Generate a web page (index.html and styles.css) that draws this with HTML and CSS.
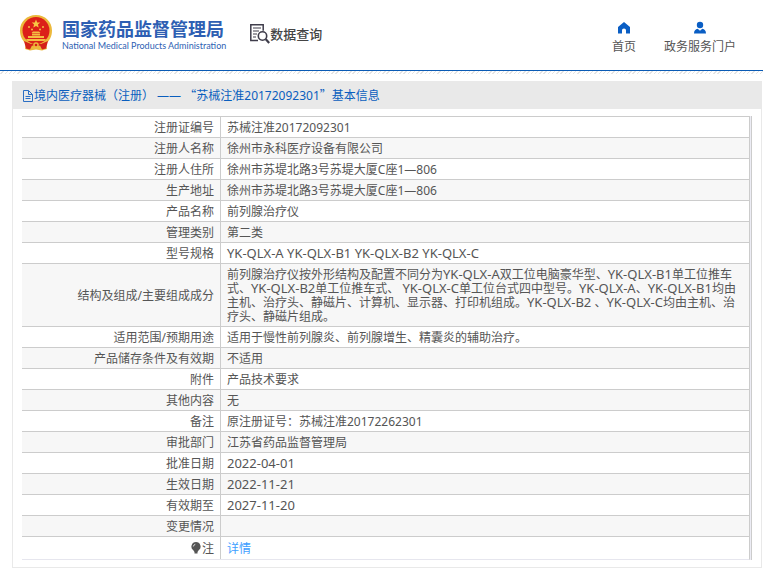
FILE: index.html
```html
<!DOCTYPE html>
<html lang="zh-CN">
<head>
<meta charset="utf-8">
<meta name="viewport" content="width=device-width, initial-scale=1">
<title>数据查询 - 国家药品监督管理局</title>
<link rel="stylesheet" href="styles.css">
</head>
<body>
<header class="header">
  <a class="brand" href="#">
    <svg class="emblem" viewBox="0 0 32 36" aria-hidden="true">
      <path d="M16 0C7 0 0 6.500 0 15.500c0 6 2.500 10.500 6 13L5 34l5 1.500 6-1 6 1 5-1.500-1-5.500c3.500-2.500 6-7 6-13C32 6.500 25 0 16 0z" fill="#ecb93c"/>
      <circle cx="16" cy="15.500" r="13.500" fill="#dc2019"/>
      <path d="M16 4.500l1.200 2.900 3.100.2-2.400 2 .8 3L16 11l-2.700 1.600.8-3-2.400-2 3.100-.2z" fill="#f7c843"/>
      <g fill="#f4bd42"><circle cx="9" cy="12" r="1"/><circle cx="12" cy="14.500" r="1"/><circle cx="20" cy="14.500" r="1"/><circle cx="23" cy="12" r="1"/>
      <path d="M11.500 18l1.500-1.500h6l1.500 1.500zM12 18.500h8v2h-8zM8 21h16v2H8zM6 24h20l-1.500 2h-17z"/></g>
      <path d="M4 26l7 3 5-1.500 5 1.500 7-3-2 7.500-4 1-2-4-4 1.500-4-1.500-2 4-4-1z" fill="#d4211a"/>
      <circle cx="16" cy="30" r="2.800" fill="#f0b93c"/><circle cx="16" cy="30" r="1.300" fill="#d4211a"/>
    </svg>
    <span class="brand-text">
      <span class="brand-cn">国家药品监督管理局</span>
      <span class="brand-en">National Medical Products Administration</span>
    </span>
  </a>
  <a class="search-title" href="#">
    <svg class="search-icon" viewBox="0 0 20 20" fill="none" stroke="#3f3d4b" aria-hidden="true">
      <path d="M8 16.500H.8V.8h12.400v6" stroke-width="1.500"/>
      <path d="M3 4h8M3 7h6M3 10h4M3 13h3" stroke-width="1.200"/>
      <circle cx="12.500" cy="12" r="4.200" stroke-width="1.600"/>
      <path d="M15.800 15.300l3.400 3.700" stroke-width="2.200"/>
    </svg>
    <span>数据查询</span>
  </a>
  <nav class="nav">
    <a href="#"><svg viewBox="0 0 14 14" aria-hidden="true"><path d="M7 1L1 6V12.500h4V9.500c0-1.200.8-2 2-2s2 .8 2 2v3h4V6z" fill="#0a5ec4"/></svg><span>首页</span></a>
    <a href="#"><svg viewBox="0 0 14 14" aria-hidden="true"><circle cx="7" cy="4" r="3.200" fill="#0a5ec4"/><path d="M1 12.500c0-3 1.500-4.300 3.700-4.700L7 9.800l2.300-2c2.200.4 3.700 1.700 3.700 4.700z" fill="#0a5ec4"/></svg><span>政务服务门户</span></a>
  </nav>
</header>
<main class="panel">
  <h1 class="panel-title"><svg class="doc-icon" viewBox="0 0 12 12" fill="none" stroke="#2b6fc4" aria-hidden="true"><path d="M1.500.5h5l4 4v7h-9zM6.500.5v4h4M3.500 6.500h5M3.500 8.500h5"/></svg><span>境内医疗器械（注册） —— <span class="quote">“</span>苏械注准20172092301<span class="quote">”</span>基本信息</span></h1>
  <div class="table-wrap">
    <table class="info">
      <tbody>
        <tr><th scope="row">注册证编号</th><td>苏械注准20172092301</td></tr>
        <tr><th scope="row">注册人名称</th><td>徐州市永科医疗设备有限公司</td></tr>
        <tr><th scope="row">注册人住所</th><td>徐州市苏堤北路3号苏堤大厦C座1—806</td></tr>
        <tr><th scope="row">生产地址</th><td>徐州市苏堤北路3号苏堤大厦C座1—806</td></tr>
        <tr><th scope="row">产品名称</th><td>前列腺治疗仪</td></tr>
        <tr><th scope="row">管理类别</th><td>第二类</td></tr>
        <tr><th scope="row">型号规格</th><td><span class="code">YK-QLX-A YK-QLX-B1 YK-QLX-B2 YK-QLX-C</span></td></tr>
        <tr><th scope="row">结构及组成/主要组成成分</th><td>前列腺治疗仪按外形结构及配置不同分为<span class="code">YK-QLX-A</span>双工位电脑豪华型、<span class="code">YK-QLX-B1</span>单工位推车式、<span class="code">YK-QLX-B2</span>单工位推车式、 <span class="code">YK-QLX-C</span>单工位台式四中型号。<span class="code">YK-QLX-A</span>、<span class="code">YK-QLX-B1</span>均由主机、治疗头、静磁片、计算机、显示器、打印机组成。<span class="code">YK-QLX-B2</span> 、<span class="code">YK-QLX-C</span>均由主机、治疗头、静磁片组成。</td></tr>
        <tr><th scope="row">适用范围/预期用途</th><td>适用于慢性前列腺炎、前列腺增生、精囊炎的辅助治疗。</td></tr>
        <tr><th scope="row">产品储存条件及有效期</th><td>不适用</td></tr>
        <tr><th scope="row">附件</th><td>产品技术要求</td></tr>
        <tr><th scope="row">其他内容</th><td>无</td></tr>
        <tr><th scope="row">备注</th><td>原注册证号：苏械注准20172262301</td></tr>
        <tr><th scope="row">审批部门</th><td>江苏省药品监督管理局</td></tr>
        <tr><th scope="row">批准日期</th><td><span class="code">2022-04-01</span></td></tr>
        <tr><th scope="row">生效日期</th><td><span class="code">2022-11-21</span></td></tr>
        <tr><th scope="row">有效期至</th><td><span class="code">2027-11-20</span></td></tr>
        <tr><th scope="row">变更情况</th><td></td></tr>
        <tr class="note"><th scope="row"><svg class="bulb" viewBox="0 0 10 12" aria-hidden="true"><path d="M5 0a4.600 4.600 0 0 0-2.700 8.300L3.500 10h3l1.200-1.700A4.600 4.600 0 0 0 5 0zM3.500 10h3v1.500h-3z" fill="#555"/><path d="M2.300 4.500c.2-1.200.9-1.900 2-2.200" fill="none" stroke="#ddd"/></svg>注</th><td><a href="#">详情</a></td></tr>
      </tbody>
    </table>
  </div>
</main>
</body>
</html>
```
FILE: styles.css
```css
* {
  box-sizing: border-box;
}

body {
  margin: 0;
  background: #fff;
  color: #555;
  font: 12px/14px "Noto Sans", "Noto Sans CJK SC", sans-serif;
}

a {
  color: inherit;
  text-decoration: none;
}

svg {
  display: block;
  flex: none;
}

.header {
  display: flex;
  align-items: center;
  height: 74px;
  padding: 0 27px 8px 20px;
  background:
    linear-gradient(#0a5bb5, #0a5bb5) 0 70px / 100% 1px no-repeat,
    repeating-linear-gradient(135deg, #fff 0 2px, #e4e4e4 2px 3px) 0 71px / 100% 3px no-repeat;
}

.brand {
  display: flex;
  align-items: center;
  gap: 10px;
  color: #2e5fb3;
}

.emblem {
  width: 32px;
  height: 36px;
}

.brand-text {
  display: flex;
  flex-direction: column;
  gap: 1px;
  padding-top: 4px;
}

.brand-cn {
  font-size: 18px;
  font-weight: 700;
  line-height: 20px;
}

.brand-en {
  font: 400 9px/12px Lato, sans-serif;
}

.search-title {
  display: flex;
  align-items: center;
  margin-left: 24px;
  padding-top: 2px;
  color: #444;
  font-size: 13px;
  font-weight: 500;
}

.search-icon {
  width: 20px;
  height: 20px;
}

.nav {
  display: flex;
  gap: 28px;
  margin-left: auto;
  padding-top: 8px;
  color: #555;
}

.nav a {
  display: flex;
  flex-direction: column;
  align-items: center;
  gap: 5px;
}

.nav svg {
  width: 14px;
  height: 14px;
}

.panel {
  margin: 7px 1px 0 12px;
  border: 1px solid #e9e9e9;
  border-top: 0;
}

.panel-title {
  display: flex;
  align-items: center;
  height: 28px;
  margin: 0;
  padding: 1px 9px 0;
  background: #e9e9e9;
  color: #0a5ebe;
  font-size: 12px;
  font-weight: 400;
}

.quote {
  font-family: "Noto Sans CJK SC", sans-serif;
}

.doc-icon {
  width: 12px;
  height: 12px;
}

.table-wrap {
  margin: 7px 9px;
  padding-right: 1px;
  border-right: 1px solid #ccc;
  background: #ececf4;
}

.info {
  width: 100%;
  border-collapse: separate;
  border-spacing: 0;
  border-right: 1px solid #ccc;
  border-bottom: 1px solid #e6e6ee;
  background: #fff;
}

.info tr:nth-child(even) {
  background: #f7f7f7;
}

.info th,
.info td {
  height: 21px;
  padding: 4px 6px 2px;
  border-top: 1px solid #ccc;
  font-weight: 400;
}

.info th {
  width: 199px;
  border-right: 1px solid #ccc;
  text-align: right;
}

.info td {
  text-align: left;
}

.info .note th,
.info .note td {
  height: 23px;
  padding: 5px 6px 3px;
}

.code {
  font-size: 13px;
  line-height: 10px;
}

.note a {
  color: #409eff;
}

.bulb {
  display: inline-block;
  width: 10px;
  height: 12px;
  margin-right: 1px;
  vertical-align: -1px;
}
```
